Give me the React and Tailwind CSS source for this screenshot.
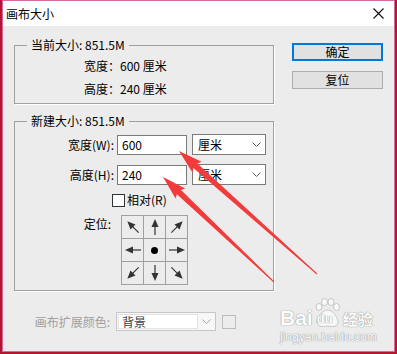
import React from 'react';

const FONT = "font-['Noto_Sans_CJK_SC',sans-serif]";

// red annotation arrows: tip -> tail, tapered shaft
function arrowPoints([tx, ty], [ex, ey], headLen, headW, w0, w1) {
  const dx = ex - tx, dy = ey - ty;
  const len = Math.hypot(dx, dy);
  const ux = dx / len, uy = dy / len;
  const px = -uy, py = ux;
  const bx = tx + ux * headLen, by = ty + uy * headLen;
  const pts = [
    [tx, ty],
    [bx + px * headW, by + py * headW],
    [bx + px * w0 / 2 + ux * -2, by + py * w0 / 2 + uy * -2],
    [ex + px * w1 / 2, ey + py * w1 / 2],
    [ex - px * w1 / 2, ey - py * w1 / 2],
    [bx - px * w0 / 2 + ux * -2, by - py * w0 / 2 + uy * -2],
    [bx - px * headW, by - py * headW],
  ];
  return pts.map(p => p.map(n => n.toFixed(1)).join(',')).join(' ');
}

function Chevron({ color }) {
  return (
    <svg width="9" height="6" viewBox="0 0 9 6">
      <path d="M0.5 0.5 L4.5 4.5 L8.5 0.5" fill="none" stroke={color} strokeWidth="1" />
    </svg>
  );
}

function DirArrow({ deg }) {
  return (
    <svg width="18" height="18" viewBox="0 0 18 18">
      <g transform={`rotate(${deg} 9 9)`}>
        <line x1="9" y1="17" x2="9" y2="6" stroke="#333" strokeWidth="1.2" />
        <polygon points="9,1 5.5,9 12.5,9" fill="#333" />
      </g>
    </svg>
  );
}

const CELLS = [-45, 0, 45, -90, null, 90, -135, 180, 135];

export default function App() {
  return (
    <div className={`relative w-[397px] h-[354px] overflow-hidden bg-[#b3172f] pl-[2px] text-[12px] text-black ${FONT}`}>
      <div className="w-[393px] h-[352px] border border-[#d9689b] bg-[#ececec] flex flex-col">
        {/* title bar */}
        <div className="h-[25px] bg-white flex items-center pl-[3px] pr-[10px]">
          <span className="flex-1 leading-4">画布大小</span>
          <svg width="11" height="11" viewBox="0 0 11 11">
            <path d="M0.5 0.5 L10.5 10.5 M10.5 0.5 L0.5 10.5" stroke="#111" strokeWidth="1.1" />
          </svg>
        </div>

        {/* body */}
        <div className="flex pl-[11px] pt-[11px]">
          <div className="w-[260px] flex flex-col">
            <fieldset className="border border-[#a0a0a0] shadow-[1px_1px_0_#fff] pt-[1px] pb-[3px]">
              <legend className="ml-[12px] px-[4px] leading-4">当前大小: 851.5M</legend>
              <div className="pl-[69px]">
                <div className="h-[23px] flex items-center">宽度：600 厘米</div>
                <div className="h-[23px] flex items-center">高度：240 厘米</div>
              </div>
            </fieldset>

            <fieldset className="mt-[9px] border border-[#a0a0a0] shadow-[1px_1px_0_#fff] pt-[5px] pb-[5px]">
              <legend className="ml-[12px] px-[4px] leading-4">新建大小: 851.5M</legend>
              {[['宽度(W):', '600'], ['高度(H):', '240']].map(([label, val], i) => (
                <div key={label} className={`flex items-center h-[21px] ${i ? 'mt-[9px]' : ''}`}>
                  <span className="w-[99px] text-right">{label}</span>
                  <div className="ml-[3px] w-[70px] h-[20px] border border-[#7a7a7a] bg-white pl-[4px] flex items-center">{val}</div>
                  <div className="ml-[5px] w-[74px] h-[21px] border border-[#7a7a7a] bg-white pl-[5px] pr-[4px] flex items-center justify-between">
                    <span>厘米</span>
                    <Chevron color="#606060" />
                  </div>
                </div>
              ))}
              <div className="mt-[8px] h-[14px] flex items-center">
                <div className="ml-[97px] w-[13px] h-[13px] border border-[#333] bg-white" />
                <span className="ml-[2px] leading-4">相对(R)</span>
              </div>
              <div className="mt-[8px] flex items-start">
                <span className="w-[96px] text-right leading-4 pt-px">定位:</span>
                <div className="ml-[10px] grid grid-cols-3 gap-px p-px bg-[#a0a0a0] w-[67px]">
                  {CELLS.map((d, i) => (
                    <div key={i} className="h-[22px] bg-[#ececec] flex items-center justify-center">
                      {d === null ? <div className="w-[7px] h-[7px] rounded-full bg-black" /> : <DirArrow deg={d} />}
                    </div>
                  ))}
                </div>
              </div>
            </fieldset>

            <div className="mt-[21px] flex items-center h-[19px]">
              <span className="w-[96px] text-right text-[#a0a0a0]">画布扩展颜色:</span>
              <div className="ml-[6px] w-[100px] h-[19px] border border-[#c7c7c7] bg-[#f7f7f7] p-px flex items-center">
                <div className="w-[80px] h-full border border-[#e2e2e2] bg-white pl-[3px] flex items-center text-[#404040]">背景</div>
                <div className="flex-1 flex justify-center">
                  <Chevron color="#a8a8a8" />
                </div>
              </div>
              <div className="ml-[6px] w-[14px] h-[14px] border border-[#bcbcbc]" />
            </div>
          </div>

          {/* buttons */}
          <div className="ml-[18px] mt-[6px] flex flex-col">
            <button className="w-[91px] h-[18px] border-2 border-[#0078d7] bg-[#e1e1e1] flex items-center justify-center leading-4">确定</button>
            <button className="mt-[10px] w-[91px] h-[18px] border border-[#adadad] bg-[#e1e1e1] flex items-center justify-center leading-4">复位</button>
          </div>
        </div>
      </div>

      {/* watermark */}
      <div className="absolute left-[280px] top-[298px] text-white opacity-90 [text-shadow:0_0_1px_#8a8a8a,0_0_1px_#8a8a8a]">
        <div className="flex items-end h-[30px]">
          <span className="font-['Liberation_Sans',sans-serif] font-bold text-[21px] leading-[21px]">Bai</span>
          <div className="relative w-[29px] h-[30px]">
            <svg width="29" height="30" viewBox="0 0 29 30" className="absolute inset-0">
              <g fill="#fafafa" stroke="#b5b5b5" strokeWidth="0.8">
                <ellipse cx="6" cy="9" rx="3" ry="3.5" />
                <ellipse cx="11.5" cy="4" rx="3" ry="3.5" />
                <ellipse cx="18" cy="4" rx="3" ry="3.5" />
                <ellipse cx="23.5" cy="9" rx="3" ry="3.5" />
                <path d="M14.5 12 C9 12 4 20 4 24 C4 29 9 29 14.5 28 C20 29 25 29 25 24 C25 20 20 12 14.5 12 Z" />
              </g>
            </svg>
            <span className="absolute left-[4px] top-[14px] font-['Liberation_Sans',sans-serif] font-bold text-[13px] leading-[13px]">du</span>
          </div>
          <span className="ml-[1px] text-[15px] leading-[18px] font-bold">经验</span>
        </div>
        <div className="font-['Liberation_Sans',sans-serif] text-[12px] leading-[14px] mt-[2px]">jingyan.baidu.com</div>
      </div>

      {/* red annotation arrows */}
      <svg className="absolute inset-0 pointer-events-none" width="397" height="354">
        <polygon points={arrowPoints([179, 151], [317, 274], 24, 7, 6, 1)} fill="#f23b3b" />
        <polygon points={arrowPoints([163, 177], [274, 282], 24, 7, 6, 1)} fill="#f23b3b" />
      </svg>
    </div>
  );
}
